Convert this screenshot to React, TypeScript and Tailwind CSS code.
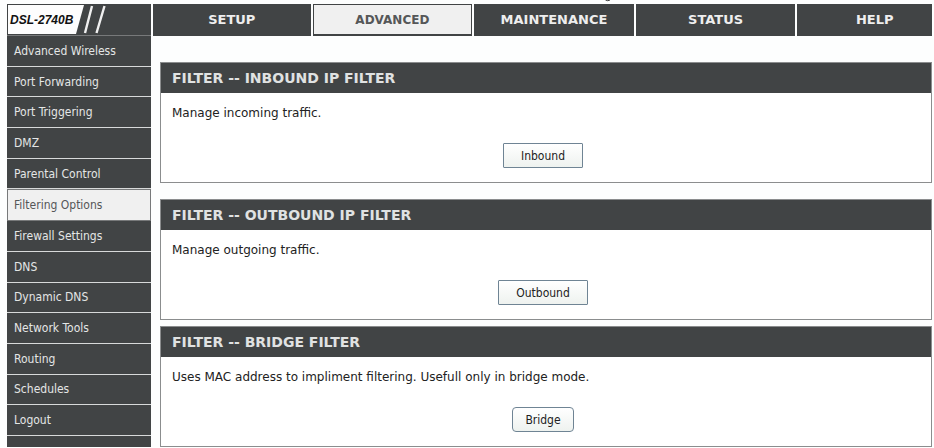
import React from 'react';
import clsx from 'clsx';

interface FilterPanelProps {
  title: string;
  description: string;
  action: string;
  rounded?: boolean;
}

const tabs = ['SETUP', 'ADVANCED', 'MAINTENANCE', 'STATUS', 'HELP'];

const menuItems = [
  'Advanced Wireless',
  'Port Forwarding',
  'Port Triggering',
  'DMZ',
  'Parental Control',
  'Filtering Options',
  'Firewall Settings',
  'DNS',
  'Dynamic DNS',
  'Network Tools',
  'Routing',
  'Schedules',
  'Logout',
];

function ModelBadge() {
  return (
    <div className="relative flex w-36 shrink-0 items-center border-b border-[#77797a] bg-[#414445]">
      <svg className="absolute inset-0" width="144" height="31" viewBox="0 0 144 31" aria-hidden="true">
        <path d="M1 1H77L69 30H1Z" fill="#fdfdfd" />
        <path d="M85 2L78 29M97.5 2L89.5 29" stroke="#f0f0f0" strokeWidth="2.4" fill="none" />
      </svg>
      <span className="relative pl-[3px] font-['Liberation_Sans',sans-serif] text-xs leading-4 font-bold text-[#111111] italic">
        DSL-2740B
      </span>
    </div>
  );
}

function FilterPanel({ title, description, action, rounded }: FilterPanelProps) {
  return (
    <section className="border border-[#8b8d8e] bg-white">
      <h2 className="flex h-[30px] items-center bg-[#414445] px-[11px] font-['DejaVu_Sans',sans-serif] text-sm leading-4 font-bold text-[#e0e2e2]">
        {title}
      </h2>
      <div className="px-[11px] pt-3 pb-[14px]">
        <p className="font-['DejaVu_Sans',sans-serif] text-xs leading-4 text-[#222222]">{description}</p>
        <div className="mt-[22px] flex justify-center pr-1.5">
          <button
            type="button"
            className={clsx(
              'h-[25px] border border-[#6f8494] bg-linear-to-b from-white to-[#eef2ef] text-xs leading-4 text-[#222222]',
              rounded ? 'rounded-sm px-3' : 'rounded-[1px] px-[17px]',
            )}
          >
            {action}
          </button>
        </div>
      </div>
    </section>
  );
}

export default function App() {
  return (
    <div className="bg-[#fdfefe] pr-0.5 pl-[7px] font-['DejaVu_Sans_Condensed','DejaVu_Sans',sans-serif]">
      <div className="flex h-1 justify-center pl-[276px]">
        <svg width="6" height="2" viewBox="0 0 6 2" aria-hidden="true">
          <path d="M0.5 0Q2.5 1.4 5 0" stroke="#333333" fill="none" />
        </svg>
      </div>

      <header className="flex h-8 gap-0.5">
        <ModelBadge />
        <nav className="grid flex-1 grid-cols-[158fr_160fr_160fr_160fr_135fr] gap-x-0.5 font-['DejaVu_Sans',sans-serif]">
          {tabs.map((tab) => (
            <a
              key={tab}
              href="#"
              className={clsx(
                'flex items-center justify-center leading-4 font-bold',
                tab === 'ADVANCED'
                  ? 'border border-b-2 border-[#414445] bg-[#f0f0f0] text-xs text-[#555758]'
                  : 'bg-[#414445] text-[13px] text-[#eeeeee]',
                tab === 'HELP' && 'pl-5',
              )}
            >
              {tab}
            </a>
          ))}
        </nav>
      </header>

      <div className="flex gap-[9px]">
        <nav className="flex w-36 shrink-0 flex-col">
          {menuItems.map((item) => (
            <a
              key={item}
              href="#"
              className={clsx(
                'flex flex-1 items-center border-b text-xs leading-4',
                item === 'Filtering Options'
                  ? 'border border-[#77797a] bg-[#f0f0f0] pl-1.5 text-[#555758]'
                  : 'border-[#d8dada] bg-[#414445] pl-[7px] text-[#e4e6e6]',
              )}
            >
              {item}
            </a>
          ))}
          <div className="h-[11px] bg-[#414445]" />
        </nav>

        <main className="min-w-0 flex-1 pt-[26px]">
          <FilterPanel title="FILTER -- INBOUND IP FILTER" description="Manage incoming traffic." action="Inbound" />
          <div className="mt-4">
            <FilterPanel title="FILTER -- OUTBOUND IP FILTER" description="Manage outgoing traffic." action="Outbound" />
          </div>
          <div className="mt-1.5">
            <FilterPanel
              title="FILTER -- BRIDGE FILTER"
              description="Uses MAC address to impliment filtering. Usefull only in bridge mode."
              action="Bridge"
              rounded
            />
          </div>
        </main>
      </div>
    </div>
  );
}
